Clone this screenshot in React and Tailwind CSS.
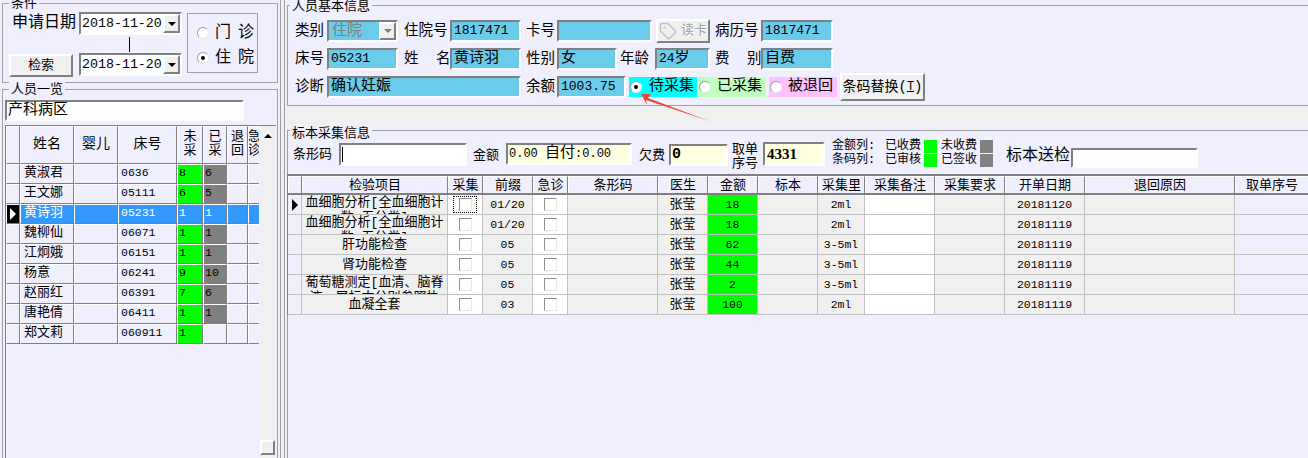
import { Tag } from 'lucide-react';

const inset = 'border-2 border-t-[#808080] border-l-[#808080] border-r-white border-b-white';
const raised = 'border-2 border-t-white border-l-white border-r-[#808080] border-b-[#808080] bg-[#f0f0f0]';

function Field({ className, children }) {
  return (
    <div className={`${inset} bg-[#6bcbeb] h-[22px] pl-[2px] leading-[17px] overflow-hidden whitespace-nowrap ${className}`}>
      {children}
    </div>
  );
}

function Label({ className, children }) {
  return <div className={`text-[14.5px] leading-[22px] whitespace-pre ${className}`}>{children}</div>;
}

function Num({ children }) {
  return <span className="text-[13px]">{children}</span>;
}

function Combo({ value }) {
  return (
    <div className={`${inset} bg-white h-[23px] w-[103px] flex items-center overflow-hidden`}>
      <span className="flex-1 pl-[1px] text-[13.3px] leading-[19px]">{value}</span>
      <span className={`${raised} w-[17px] h-[19px] flex items-center justify-center`}>
        <span className="w-0 h-0 border-x-[4px] border-x-transparent border-t-[4px] border-t-black" />
      </span>
    </div>
  );
}

function Radio({ checked }) {
  return (
    <span className="w-[12px] h-[12px] shrink-0 rounded-full bg-white border border-[#a0a0a0] border-b-[#e8e8e8] border-r-[#e8e8e8] flex items-center justify-center">
      {checked && <span className="w-[4px] h-[4px] rounded-full bg-black" />}
    </span>
  );
}

function GroupTitle({ className, children }) {
  return (
    <span className={`absolute px-[2px] bg-[#efeffd] text-[13px] leading-[15px] whitespace-nowrap ${className}`}>
      {children}
    </span>
  );
}

function Check({ focus }) {
  const box = <span className="block w-[13px] h-[13px] bg-white border border-t-[#909090] border-l-[#909090] border-r-[#e8e8e8] border-b-[#e8e8e8]" />;
  if (!focus) return box;
  return <span className="w-[24px] h-[17px] flex items-center justify-center border border-dotted border-black">{box}</span>;
}

const patients = [
  ['黄淑君', '0636', '8', '6'],
  ['王文娜', '05111', '6', '5'],
  ['黄诗羽', '05231', '1', '1'],
  ['魏柳仙', '06071', '1', '1'],
  ['江炯娥', '06151', '1', '1'],
  ['杨意', '06241', '9', '10'],
  ['赵丽红', '06391', '7', '6'],
  ['唐艳倩', '06411', '1', '1'],
  ['郑文莉', '060911', '1', ''],
];

const leftCols = 'grid grid-cols-[14px_54px_44px_59px_26px_24px_21px_12px]';
const cellLeft = 'border-r border-b border-r-[#808080] border-b-[#808080] border-t border-l border-t-white border-l-white overflow-hidden';

function PatientGrid() {
  return (
    <div className="flex w-[271px] flex-1 border-t border-l border-[#808080] bg-[#efeffd] min-h-0">
      <div className="w-[253px] overflow-hidden">
        <div className={`${leftCols} h-[38px] text-[13px] leading-[14px] text-center`}>
          <div className={cellLeft} />
          <div className={`${cellLeft} flex items-center justify-center text-[14px] pb-[3px]`}>姓名</div>
          <div className={`${cellLeft} flex items-center justify-center text-[14px] pb-[3px]`}>婴儿</div>
          <div className={`${cellLeft} flex items-center justify-center text-[14px] pb-[3px]`}>床号</div>
          <div className={`${cellLeft} flex items-center justify-center pb-[3px]`}>未采</div>
          <div className={`${cellLeft} flex items-center justify-center pb-[3px]`}>已采</div>
          <div className={`${cellLeft} flex items-center justify-center pb-[3px]`}>退回</div>
          <div className={`${cellLeft} flex items-center justify-center pb-[3px]`}>急诊</div>
        </div>
        {patients.map((p, i) => {
          const sel = i === 2;
          const base = sel ? 'bg-[#3399ff] text-white' : '';
          const num = 'text-[11.5px] leading-[15px] pl-[1px]';
          return (
            <div key={p[1]} className={`${leftCols} h-[20px] text-[13px] leading-[15px]`}>
              <div className={`${cellLeft} flex items-center justify-center ${sel ? 'bg-black' : ''}`}>
                {sel && <span className="w-0 h-0 border-y-[6px] border-y-transparent border-l-[6px] border-l-white" />}
              </div>
              <div className={`${cellLeft} ${base} pl-[3px]`}>{p[0]}</div>
              <div className={`${cellLeft} ${base}`} />
              <div className={`${cellLeft} ${base} pl-[2px] text-[11.5px]`}>{p[1]}</div>
              <div className={`${cellLeft} ${num} ${sel ? base : 'bg-[#00ff00]'}`}>{p[2]}</div>
              <div className={`${cellLeft} ${num} ${sel ? base : p[3] ? 'bg-[#808080]' : ''}`}>{p[3]}</div>
              <div className={`${cellLeft} ${base}`} />
              <div className={`${cellLeft} ${base}`} />
            </div>
          );
        })}
      </div>
      <div className="w-[17px] bg-[#f0f0f0] flex flex-col justify-between items-center">
        <span className="mt-[8px] w-0 h-0 border-x-[4px] border-x-transparent border-b-[4px] border-b-black" />
        <span className={`${raised} w-[15px] h-[15px] mb-[3px] -ml-[1px]`} />
      </div>
    </div>
  );
}

const items = [
  ['血细胞分析[全血细胞计数:五分类]', '01/20', '18', '2ml', '20181120'],
  ['血细胞分析[全血细胞计数:五分类]', '01/20', '18', '2ml', '20181119'],
  ['肝功能检查', '05', '62', '3-5ml', '20181119'],
  ['肾功能检查', '05', '44', '3-5ml', '20181119'],
  ['葡萄糖测定[血清、脑脊液、尿标本分别参照执行]', '05', '2', '3-5ml', '20181119'],
  ['血凝全套', '03', '100', '2ml', '20181119'],
];

const rightCols = 'grid grid-cols-[14px_146px_35px_50px_35px_90px_50px_50px_60px_47px_70px_70px_80px_150px_74px]';
const headCell = 'border-r border-r-[#808080] border-t border-l border-t-white border-l-white flex items-center justify-center overflow-hidden whitespace-nowrap';
const bodyCell = 'border-r border-b border-r-[#c0c0c0] border-b-[#c0c0c0] flex items-center justify-center overflow-hidden text-[11.5px]';

function SampleGrid() {
  const heads = ['', '检验项目', '采集', '前缀', '急诊', '条形码', '医生', '金额', '标本', '采集里', '采集备注', '采集要求', '开单日期', '退回原因', '取单序号'];
  return (
    <div className="w-[1022px] border-l border-[#808080]">
      <div className={`${rightCols} h-[21px] border-t-2 border-b-2 border-[#808080] text-[13px] leading-[15px]`}>
        {heads.map((h) => (
          <div key={h || 'corner'} className={headCell}>{h}</div>
        ))}
      </div>
      {items.map((it, i) => (
        <div key={i} className={`${rightCols} h-[20px] bg-[#f0f0f0]`}>
          <div className={`${bodyCell} bg-[#efeffd]`}>
            {i === 0 && <span className="w-0 h-0 border-y-[6px] border-y-transparent border-l-[6px] border-l-black" />}
          </div>
          <div className={`${bodyCell} !items-start text-center text-[13px] leading-[15px] px-[2px]`}>
            <span className={it[0].length < 8 ? 'mt-[2px]' : ''}>{it[0]}</span>
          </div>
          <div className={`${bodyCell} bg-white`}><Check focus={i === 0} /></div>
          <div className={bodyCell}>{it[1]}</div>
          <div className={`${bodyCell} bg-white`}><Check /></div>
          <div className={bodyCell} />
          <div className={`${bodyCell} text-[13px]`}>张莹</div>
          <div className={`${bodyCell} bg-[#00ff00]`}>{it[2]}</div>
          <div className={bodyCell} />
          <div className={bodyCell}>{it[3]}</div>
          <div className={`${bodyCell} bg-white`} />
          <div className={bodyCell} />
          <div className={bodyCell}>{it[4]}</div>
          <div className={bodyCell} />
          <div className={`${bodyCell} bg-[#efeffd]`} />
        </div>
      ))}
    </div>
  );
}

export default function App() {
  return (
    <div className="relative w-[1308px] h-[458px] overflow-hidden flex bg-[#f0f0f0] text-black font-['Liberation_Mono','Noto_Sans_CJK_SC',monospace]">
      {/* left column */}
      <div className="w-[280px] h-full shrink-0 bg-[#efeffd] pl-[2px] pt-[3px] flex flex-col">
        <div className="relative w-[276px] h-[80px] shrink-0 border border-[#a0a0a0] pt-[8px] pl-[6px] flex">
          <GroupTitle className="left-[6px] -top-[8px]">条件</GroupTitle>
          <div className="w-[173px]">
            <div className="flex">
              <div className="w-[70px] pl-[3px] text-[16px] leading-[23px] whitespace-nowrap">申请日期:</div>
              <Combo value="2018-11-20" />
            </div>
            <div className="ml-[120px] w-px h-[18px] pt-[2px]">
              <div className="w-px h-[15px] bg-black" />
            </div>
            <div className="flex">
              <div className={`${raised} w-[64px] h-[23px] mt-[1px] text-[13px] leading-[19px] text-center`}>检索</div>
              <div className="ml-[6px]"><Combo value="2018-11-20" /></div>
            </div>
          </div>
          <div className="ml-[5px] mt-[1px] w-[71px] h-[60px] border border-[#a0a0a0] flex flex-col justify-center gap-[9px] pl-[9px] pt-[5px] text-[16px] leading-[16px]">
            <div className="flex items-center gap-[6px]"><Radio /><span>门</span><span className="ml-[1px]">诊</span></div>
            <div className="flex items-center gap-[6px]"><Radio checked /><span>住</span><span className="ml-[1px]">院</span></div>
          </div>
        </div>
        <div className="relative mt-[6px] w-[276px] flex-1 min-h-0 border border-[#a0a0a0] border-b-0 pt-[10px] pl-[2px] flex flex-col">
          <GroupTitle className="left-[6px] -top-[8px]">人员一览</GroupTitle>
          <div className={`${inset} bg-white w-[239px] h-[21px] shrink-0 pl-[1px] text-[15px] leading-[17px]`}>产科病区</div>
          <div className="h-[4px] shrink-0" />
          <PatientGrid />
        </div>
      </div>

      {/* splitter */}
      <div className="w-[5px] h-full shrink-0 border-x border-[#a0a0a0] bg-[#f0f0f0]" />

      {/* right column */}
      <div className="w-[1023px] shrink-0">
        <div className="bg-[#efeffd] pt-[5px] pl-[2px] h-[106px]">
          <div className="relative h-[101px] border-t border-l border-b border-[#a0a0a0] pt-[14px] pl-[7px] flex flex-col gap-[6px] text-[15px]">
            <GroupTitle className="left-[2px] -top-[7px]">人员基本信息</GroupTitle>
            <div className="flex h-[22px] items-center">
              <Label className="w-[32px]">类别</Label>
              <div className={`${inset} bg-[#6bcbeb] w-[71px] h-[22px] flex items-center text-[#808080] pl-[3px] leading-[17px]`}>
                <span className="flex-1">住院</span>
                <span className={`${raised} w-[17px] h-[18px] flex items-center justify-center`}>
                  <span className="w-0 h-0 border-x-[4px] border-x-transparent border-t-[4px] border-t-[#808080]" />
                </span>
              </div>
              <Label className="ml-[6px] w-[46px]">住院号</Label>
              <Field className="w-[71px]"><Num>1817471</Num></Field>
              <Label className="ml-[5px] w-[31px]">卡号</Label>
              <Field className="w-[95px]" />
              <div className={`${raised} ml-[4px] w-[54px] h-[24px] shrink-0 flex items-center gap-[2px] pl-[1px] text-[13px] text-[#a0a0a0] [text-shadow:1px_1px_0_#fff] whitespace-nowrap`}>
                <Tag size={18} strokeWidth={2} className="text-[#c0c0c0]" />
                <span className="ml-[2px]">读卡</span>
              </div>
              <Label className="ml-[5px] w-[46px]">病历号</Label>
              <Field className="w-[72px]"><Num>1817471</Num></Field>
            </div>
            <div className="flex h-[22px] items-center">
              <Label className="w-[32px]">床号</Label>
              <Field className="w-[71px]"><Num>05231</Num></Field>
              <Label className="ml-[6px] w-[46px]">姓  名</Label>
              <Field className="w-[71px]">黄诗羽</Field>
              <Label className="ml-[5px] w-[31px]">性别</Label>
              <Field className="w-[60px]">女</Field>
              <Label className="ml-[3px] w-[35px]">年龄</Label>
              <Field className="w-[55px]"><Num>24</Num>岁</Field>
              <Label className="ml-[5px] w-[46px]">费  别</Label>
              <Field className="w-[72px]">自费</Field>
            </div>
            <div className="flex h-[22px] items-center">
              <Label className="w-[32px]">诊断</Label>
              <Field className="w-[194px]">确认妊娠</Field>
              <Label className="ml-[5px] w-[31px]">余额</Label>
              <Field className="w-[69px]"><Num>1003.75</Num></Field>
              <div className="ml-[3px] w-[68px] h-[20px] bg-[#00ffff] flex items-center gap-[7px] pl-[1px] whitespace-nowrap"><Radio checked /><span>待采集</span></div>
              <div className="ml-[1px] w-[68px] h-[20px] bg-[#c0ffc0] flex items-center gap-[6px] pl-[1px] whitespace-nowrap"><Radio /><span>已采集</span></div>
              <div className="ml-[3px] w-[68px] h-[20px] bg-[#ffc0ff] flex items-center gap-[6px] pl-[1px] whitespace-nowrap"><Radio /><span>被退回</span></div>
              <div className={`${raised} ml-[3px] w-[85px] h-[28px] shrink-0 flex items-center justify-center text-[14px] whitespace-nowrap`}>条码替换(<span className="text-[12px] underline">T</span>)</div>
            </div>
          </div>
        </div>

        <div className="mt-[19px] bg-[#efeffd] pt-[5px] pl-[2px] h-[333px]">
          <div className="relative h-[328px] border-t border-l border-[#a0a0a0]">
            <GroupTitle className="left-[2px] -top-[5px]">标本采集信息</GroupTitle>
            <div className="flex h-[43px] pl-[5px] items-start text-[13px] whitespace-nowrap">
              <div className="w-[46px] pt-[16px] leading-[15px]">条形码</div>
              <div className={`${inset} mt-[12px] bg-white w-[128px] h-[23px] pl-[1px] flex items-center`}>
                <span className="w-px h-[15px] bg-black" />
              </div>
              <div className="ml-[6px] w-[33px] pt-[17px] leading-[15px]">金额</div>
              <div className={`${inset} mt-[12px] bg-[#ffffe1] w-[126px] h-[22px] pl-[1px] text-[15px] leading-[17px]`}>
                <span className="text-[12px]">0.00 </span>自付<span className="text-[12px]">:0.00</span>
              </div>
              <div className="ml-[7px] w-[30px] pt-[17px] leading-[15px]">欠费</div>
              <div className={`${inset} mt-[13px] bg-[#ffffe1] w-[59px] h-[22px] pl-[1px] text-[15px] leading-[17px] font-bold`}>0</div>
              <div className="ml-[4px] w-[31px] pt-[12px] leading-[14px]">取单<br />序号</div>
              <div className={`${inset} mt-[11px] bg-[#ffffe1] w-[62px] h-[24px] pl-[2px] text-[15px] leading-[20px] font-bold font-['Liberation_Serif',serif]`}>4331</div>
              <div className="ml-[7px] mt-[9px] grid grid-cols-[53px_39px_17px_39px_13px] auto-rows-[13px] gap-y-[1px] text-[12px] leading-[13px]">
                <span>金额列:</span><span>已收费</span><span className="w-[13px] h-[13px] bg-[#00ff00]" /><span>未收费</span><span className="w-[13px] h-[13px] bg-[#808080]" />
                <span>条码列:</span><span>已审核</span><span className="w-[13px] h-[13px] bg-[#00ff00]" /><span>已签收</span><span className="w-[13px] h-[13px] bg-[#808080]" />
              </div>
              <div className="ml-[13px] w-[65px] pt-[16px] text-[16px] leading-[18px]">标本送检</div>
              <div className={`${inset} mt-[17px] bg-white w-[127px] h-[20px]`} />
            </div>
            <div className="-ml-px">
              <SampleGrid />
            </div>
          </div>
        </div>
      </div>

      {/* red annotation arrow */}
      <svg className="absolute inset-0 pointer-events-none" width="1308" height="458">
        <polygon points="641,94 651,94 648,98 709,121 646,100 647,105" fill="#f0453a" />
      </svg>
    </div>
  );
}
